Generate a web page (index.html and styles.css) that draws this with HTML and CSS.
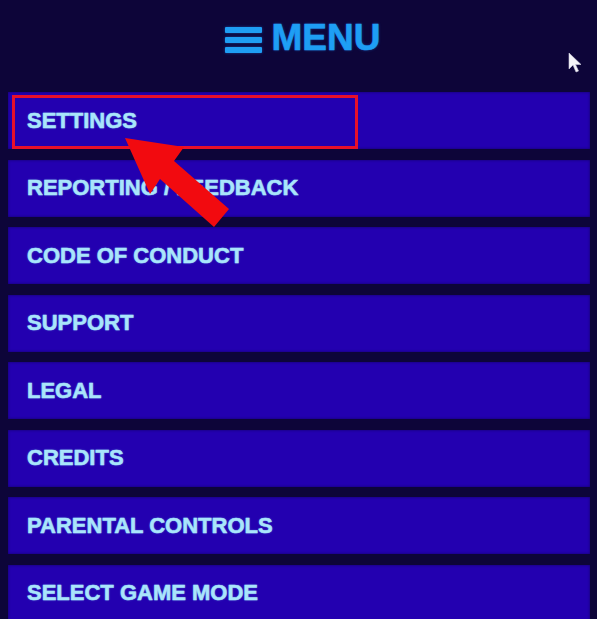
FILE: index.html
```html
<!DOCTYPE html>
<html lang="en">
<head>
<meta charset="utf-8">
<title>Menu</title>
<link rel="stylesheet" href="styles.css">
</head>
<body>
<div class="page">
  <header class="header">
    <h1 class="title">
      <span class="burger"><i></i><i></i><i></i></span>
      <span>MENU</span>
    </h1>
  </header>
  <ul class="menu">
    <li class="item highlighted"><span class="label">SETTINGS</span></li>
    <li class="item"><span class="label">REPORTING / FEEDBACK</span></li>
    <li class="item"><span class="label">CODE OF CONDUCT</span></li>
    <li class="item"><span class="label">SUPPORT</span></li>
    <li class="item"><span class="label">LEGAL</span></li>
    <li class="item"><span class="label">CREDITS</span></li>
    <li class="item"><span class="label">PARENTAL CONTROLS</span></li>
    <li class="item"><span class="label">SELECT GAME MODE</span></li>
  </ul>
  <svg class="arrow" width="597" height="619" viewBox="0 0 597 619">
    <polygon points="125,138 184,147 174,161 229,209 214,227 160,179 150,194" fill="#f20a0f"/>
  </svg>
  <svg class="cursor" width="16" height="24" viewBox="0 0 16 24">
    <path d="M1 1 L1 17 L5 13 L8 20 L10.5 19 L7.5 12.5 L13 12.5 Z" fill="#f4f4f8" stroke="#d0d0e0" stroke-width="0.6"/>
  </svg>
</div>
</body>
</html>
```

FILE: styles.css
```css
html, body {
  margin: 0;
  padding: 0;
  background: #0d0539;
}
.page {
  position: relative;
  width: 597px;
  height: 619px;
  overflow: hidden;
  font-family: "Liberation Sans", Arial, sans-serif;
}
.header {
  height: 92px;
  display: flex;
  justify-content: center;
  padding-left: 8px;
  box-sizing: border-box;
}
.title {
  margin: 0;
  padding-top: 18px;
  display: flex;
  align-items: flex-start;
  gap: 10px;
  font-size: 37px;
  font-weight: 700;
  line-height: 40px;
  color: #1e9ef4;
  -webkit-text-stroke: 0.6px #1e9ef4;
  text-shadow: 0 0 3px rgba(40, 150, 255, 0.45);
}
.burger {
  display: flex;
  flex-direction: column;
  gap: 4px;
  margin-top: 9px;
}
.burger i {
  display: block;
  width: 37px;
  height: 6px;
  border-radius: 1px;
  background: #1e9ef4;
  box-shadow: 0 0 3px rgba(40, 150, 255, 0.45);
}
.menu {
  list-style: none;
  margin: 0 7px 0 8px;
  padding: 0;
  display: flex;
  flex-direction: column;
  gap: 10.5px;
}
.item {
  height: 57px;
  display: flex;
  align-items: center;
  padding-left: 19px;
  background: #2300b0;
  box-shadow: inset 0 0 3px rgba(10, 0, 60, 0.6);
  position: relative;
}
.label {
  font-size: 22px;
  font-weight: 700;
  letter-spacing: 0;
  color: #a9e5fb;
  -webkit-text-stroke: 0.5px #a9e5fb;
  text-shadow: 0 0 2px rgba(140, 220, 255, 0.55);
}
.highlighted::after {
  content: "";
  position: absolute;
  left: 4px;
  top: 3px;
  width: 346px;
  height: 54px;
  box-sizing: border-box;
  border: 3px solid #e8102a;
}
.arrow {
  position: absolute;
  left: 0;
  top: 0;
  pointer-events: none;
}
.cursor {
  position: absolute;
  left: 568px;
  top: 52px;
}
```
